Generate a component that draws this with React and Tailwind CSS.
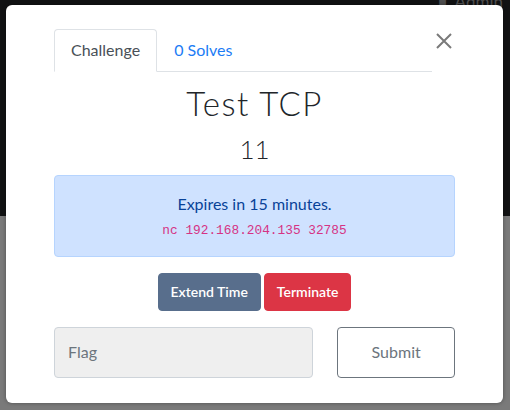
import React from 'react';

function CloseIcon() {
  return (
    <svg width="18" height="18" viewBox="0 0 18 18" className="block">
      <path d="M2 2 L16 16 M16 2 L2 16" stroke="#7a7a7a" strokeWidth="2" fill="none" />
    </svg>
  );
}

export default function App() {
  return (
    <div className="relative h-[410px] w-[510px] overflow-hidden font-[Lato,_'Noto_Sans',_sans-serif]">
      {/* page behind the backdrop */}
      <div className="flex h-full flex-col">
        <div className="h-[216px] bg-[#111213]" />
        <div className="flex-1 bg-[#7a7a7a]" />
      </div>
      <div className="absolute right-[7px] top-[-11px] flex items-center gap-2 text-[17px] text-[#4f4f4f]">
        <span className="text-[14px]">&#9632;</span>
        <span>Admin</span>
      </div>

      {/* modal */}
      <div className="absolute left-[6px] top-[5px] h-[398px] w-[497px] rounded-[6px] bg-white px-[48px] pt-[24px] shadow-[0_0_4px_rgba(0,0,0,0.35)]">
        <div className="flex items-start">
          <div className="flex flex-1 border-b border-[#dee2e6]">
            <div className="-mb-px rounded-t-[4px] border border-[#dee2e6] border-b-white bg-white px-4 py-2 text-[16px] leading-6 text-[#495057]">
              Challenge
            </div>
            <div className="border border-transparent px-4 py-2 text-[16px] leading-6 text-[#1c7cf5]">
              0 Solves
            </div>
          </div>
          <div className="flex w-[23px] justify-end pr-[2px] pt-[3px]">
            <CloseIcon />
          </div>
        </div>

        <div className="mt-[12px] text-center text-[33px] font-light leading-[1.2] tracking-[1.5px] text-[#212529]">
          Test TCP
        </div>
        <div className="mt-[10px] text-center text-[26px] font-light leading-[1.2] text-[#212529]">11</div>

        <div className="mt-[10px] rounded-[4px] border border-[#b6d4fe] bg-[#cfe2ff] py-4 text-center text-[16px] leading-6">
          <div className="text-[#084298]">Expires in 15 minutes.</div>
          <div className="h-6">
            <code className="font-['Liberation_Mono',_monospace] text-[12.8px] text-[#d63384]">nc 192.168.204.135 32785</code>
          </div>
        </div>

        <div className="mt-4 flex justify-center gap-[3px]">
          <button className="h-[38px] rounded-[4px] border border-[#586e8c] bg-[#586e8c] px-3 text-[14px] font-semibold text-white">
            Extend Time
          </button>
          <button className="h-[38px] rounded-[4px] border border-[#dc3545] bg-[#dc3545] px-3 text-[14px] font-semibold text-white">
            Terminate
          </button>
        </div>

        <div className="mt-4 flex gap-[24px]">
          <div className="flex h-[51px] w-[260px] items-center rounded-[4px] border border-[#ced4da] bg-[#efefef] px-[13px] text-[16px] text-[#6c757d]">
            Flag
          </div>
          <button className="flex h-[51px] w-[118px] items-center justify-center rounded-[4px] border border-[#6c757d] bg-white text-[16px] text-[#6c757d]">
            Submit
          </button>
        </div>
      </div>
    </div>
  );
}
